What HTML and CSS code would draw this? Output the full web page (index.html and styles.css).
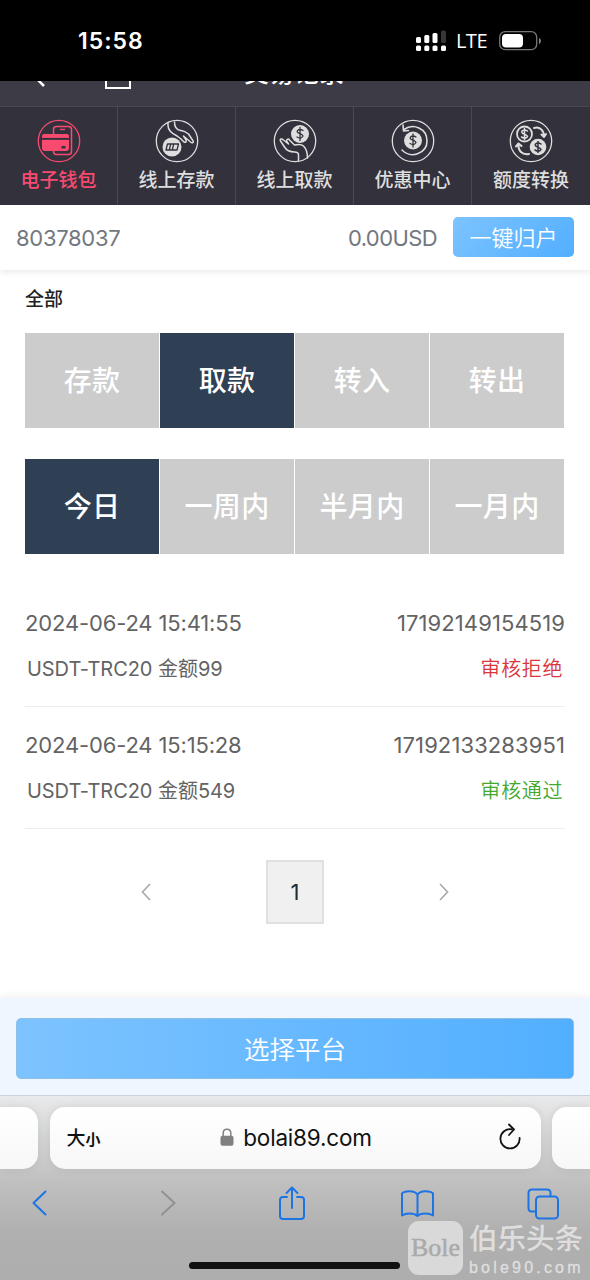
FILE: index.html
```html
<!DOCTYPE html>
<html lang="zh-CN">
<head>
<meta charset="utf-8">
<title>交易记录</title>
<link rel="stylesheet" href="styles.css">
</head>
<body>
<div class="screen">
  <header class="status">
    <span class="clock">15:58</span>
    <div class="status-right">
      <svg class="signal" width="30" height="22" viewBox="0 0 30 22" fill="#fff">
        <rect x="0" y="7" width="5" height="6" rx="1.5"/><rect x="8.300" y="5" width="5" height="8" rx="1.500"/><rect x="16.500" y="3" width="5" height="10" rx="1.500"/><rect x="25" y="0.500" width="5" height="12.500" rx="1.500" fill="#363636"/>
        <rect x="0" y="15.500" width="5" height="5.500" rx="1.500"/><rect x="8.300" y="15.500" width="5" height="5.500" rx="1.500"/><rect x="16.500" y="15.500" width="5" height="5.500" rx="1.500"/><rect x="25" y="15.500" width="5" height="5.500" rx="1.500"/>
      </svg>
      <span class="lte">LTE</span>
      <svg class="battery" width="43" height="20" viewBox="0 0 43 20">
        <rect x="0.700" y="0.700" width="37" height="18" rx="5.500" fill="none" stroke="#777" stroke-width="1.300"/>
        <rect x="3" y="3" width="21" height="13.500" rx="4" fill="#fff"/>
        <path d="M40 7c2.500 1 2.500 5 0 6z" fill="#888"/>
      </svg>
    </div>
  </header>

  <div class="titlebar">
    <div class="titlebar-inner">
      <svg class="title-back" width="14" height="22" viewBox="0 0 14 22" fill="none" stroke="#fff" stroke-width="2.500"><path d="M11 1L2 11l10 10"/></svg>
      <svg class="title-home" width="26" height="24" viewBox="0 0 26 24" fill="none" stroke="#fff" stroke-width="2"><path d="M1 0v23h24V0"/></svg>
      <h1 class="title">交易记录</h1>
    </div>
  </div>

  <nav class="nav">
    <a class="nav-item active">
      <svg width="44" height="44" viewBox="0 0 44 44" fill="none" stroke="currentColor" stroke-width="1.300">
        <circle cx="22" cy="22" r="20.700"/>
        <rect x="16.500" y="7.500" width="18" height="28" rx="3" stroke-width="1.500"/><path d="M23 10.500h5"/>
        <path d="M7 15h23q2 0 2 3v1H5v-1q0-3 2-3zM5 20.500h27V29q0 3-3 3H8q-3 0-3-3z" fill="currentColor" stroke="none"/>
        <path d="M4 19.800h29" stroke="#33323c" stroke-width="1.800"/>
        <rect x="24.500" y="27" width="4" height="2.500" fill="#33323c" stroke="none"/>
      </svg>
      <span>电子钱包</span>
    </a>
    <a class="nav-item">
      <svg width="44" height="44" viewBox="0 0 44 44" fill="none" stroke="currentColor" stroke-width="1.300" stroke-linecap="round" stroke-linejoin="round">
        <circle cx="22" cy="22" r="20.700"/>
        <path d="M13 3.500v3c0 5 4 8 9 10.500l4 3 3 3c2 1 3-1 1.500-3l-2-3 7 6c2 1.500 4 0 2-2l-4-6c-4-3-5-3-8-3.500q-6-1-6-8.500" stroke-width="1.500"/>
        <circle cx="17" cy="28" r="9.500" fill="currentColor" stroke="none"/>
        <path d="M12.500 25h11l-1.500 6H11zM15.500 26l-1 4M18.500 26l-1 4" stroke="#33323c" stroke-width="1.300"/>
      </svg>
      <span>线上存款</span>
    </a>
    <a class="nav-item">
      <svg width="44" height="44" viewBox="0 0 44 44" fill="none" stroke="currentColor" stroke-width="1.300" stroke-linecap="round" stroke-linejoin="round">
        <circle cx="22" cy="22" r="20.700"/>
        <circle cx="27" cy="15" r="9" fill="currentColor" stroke="none"/>
        <path d="M30 11.500q-3-2-5.500 0c-2 3 5.500 3 5.500 5.500q-2 3.500-6 1M27 8.500v13" stroke="#33323c"/>
        <path d="M25.500 42v-6q0-3-4-3-7 0-10-5l-4-6c-1-2 1-3 3-1l5 4-2-3c0-2 2-2.500 3-1l5 5c4-1 7-1 9 1q4 4 4 12" stroke-width="1.500"/>
      </svg>
      <span>线上取款</span>
    </a>
    <a class="nav-item">
      <svg width="44" height="44" viewBox="0 0 44 44" fill="none" stroke="currentColor" stroke-width="1.300" stroke-linecap="round" stroke-linejoin="round">
        <circle cx="22" cy="22" r="20.700"/>
        <circle cx="22" cy="21.500" r="9" fill="currentColor" stroke="none"/>
        <path d="M25 18q-3-2-5.500 0c-2 3 5.500 3 5.500 5.500q-2 3.500-6 1M22 15v13" stroke="#33323c"/>
        <path d="M13 10.500C22 4 36 9 36 22c0 13-17 18-25 9M12 6l.5 6 5-.5" stroke-width="1.600"/>
      </svg>
      <span>优惠中心</span>
    </a>
    <a class="nav-item">
      <svg width="44" height="44" viewBox="0 0 44 44" fill="none" stroke="currentColor" stroke-width="1.300" stroke-linecap="round" stroke-linejoin="round">
        <circle cx="22" cy="22" r="20.700"/>
        <circle cx="15.500" cy="15" r="7.500" stroke-width="1.800"/>
        <path d="M18.500 12q-3-2-5.500 0c-2 3 5.500 3 5.500 5.500q-2 3-6 .5M15.500 9.500v11" stroke-width="1.500"/>
        <circle cx="29" cy="28" r="8.300" fill="currentColor" stroke="none"/>
        <path d="M32 25q-3-2-5.500 0c-2 3 5.500 3 5.500 5.500q-2 3-6 .5M29 22.500v11" stroke="#33323c" stroke-width="1.500"/>
        <path d="M25 9c6-2 10 3 10 8M32.500 15.500l2.500 2.500 2-3M20 35c-7 1-11-3-10.500-10M7 27.500l2.500-3 3 2.500" stroke-width="2"/>
      </svg>
      <span>额度转换</span>
    </a>
  </nav>

  <section class="account">
    <span class="account-id">80378037</span>
    <span class="balance">0.00USD</span>
    <button class="collect">一键归户</button>
  </section>

  <main class="content">
    <h2 class="filter-title">全部</h2>
    <div class="tabs">
      <span class="tab">存款</span><span class="tab selected">取款</span><span class="tab">转入</span><span class="tab">转出</span>
    </div>
    <div class="tabs">
      <span class="tab selected">今日</span><span class="tab">一周内</span><span class="tab">半月内</span><span class="tab">一月内</span>
    </div>

    <ul class="records">
      <li class="record">
        <div class="record-line top"><span>2024-06-24 15:41:55</span><span class="order">17192149154519</span></div>
        <div class="record-line bottom"><span>USDT-TRC20 金额99</span><span class="state rejected">审核拒绝</span></div>
      </li>
      <li class="record">
        <div class="record-line top"><span>2024-06-24 15:15:28</span><span class="order">17192133283951</span></div>
        <div class="record-line bottom"><span>USDT-TRC20 金额549</span><span class="state passed">审核通过</span></div>
      </li>
    </ul>

    <div class="pager">
      <svg width="10" height="18" viewBox="0 0 10 18" fill="none" stroke="#aaa" stroke-width="1.700"><path d="M9 1L1.500 9 9 17"/></svg>
      <span class="page">1</span>
      <svg width="10" height="18" viewBox="0 0 10 18" fill="none" stroke="#aaa" stroke-width="1.700"><path d="M1 1l7.500 8L1 17"/></svg>
    </div>
  </main>

  <div class="platform">
    <button class="platform-btn">选择平台</button>
  </div>

  <footer class="browser">
    <div class="address-row">
      <div class="side-tab left"></div>
      <div class="address">
        <span class="size">大<small>小</small></span>
        <div class="site">
          <svg width="14" height="18" viewBox="0 0 14 18"><path d="M3.200 9V5.200c0-5.200 7.600-5.200 7.600 0V9" fill="none" stroke="#808080" stroke-width="1.500"/><rect x="0.500" y="7.700" width="13" height="10" rx="2" fill="#808080"/></svg>
          <span>bolai89.com</span>
        </div>
        <svg class="reload" width="24" height="28" viewBox="0 0 24 28" fill="none" stroke="#111" stroke-width="1.800" stroke-linecap="round" stroke-linejoin="round"><path d="M13.500 6.300A9.600 9.600 0 1 0 21.600 15M11 1.500l5 5-5 5.500"/></svg>
      </div>
      <div class="side-tab right"></div>
    </div>
    <div class="toolbar">
      <svg width="36" height="36" viewBox="0 0 36 36"><path d="M23.500 6.500L11.500 18l12 11.500"/></svg>
      <svg class="disabled" width="36" height="36" viewBox="0 0 36 36"><path d="M14 6.500L26.500 18 14 29.500"/></svg>
      <svg width="36" height="36" viewBox="0 0 36 36"><path d="M13 12H9q-3 0-3 3v16q0 3 3 3h18q3 0 3-3V15q0-3-3-3h-4M18 23V2.500M12.500 8L18 2.500 23.500 8"/></svg>
      <svg width="36" height="36" viewBox="0 0 36 36"><path d="M18.500 31V9.500C15.500 5 5.500 5.500 3 8.500v22c3.500-2.500 12-3 15.500.5 3.500-3.500 12-3 15.500-.5v-22C31.500 5.500 21.500 5 18.500 9.500"/></svg>
      <svg width="36" height="36" viewBox="0 0 36 36"><rect x="11" y="11.500" width="22" height="22" rx="3.500"/><path d="M11 26.500H7q-3.500 0-3.500-3.500V8Q3.500 4.500 7 4.500h15q3.500 0 3.500 3.500v3"/></svg>
    </div>
    <div class="home-indicator"></div>
  </footer>

  <div class="watermark">
    <div class="mark-logo">Bole</div>
    <div class="mark-text"><span class="mark-name">伯乐头条</span><span class="mark-url">bole90.com</span></div>
  </div>
</div>
</body>
</html>
```
FILE: styles.css
```css
* { box-sizing: border-box; }
body { margin: 0; background: #fff; font-family: Inter, "Noto Sans CJK SC", sans-serif; }
h1, h2, ul { margin: 0; padding: 0; }
button { border: 0; padding: 0; font-family: inherit; }
svg { display: block; flex: none; }
span { white-space: nowrap; }
.screen { position: relative; width: 590px; height: 1280px; overflow: hidden; display: flex; flex-direction: column; }

.status { height: 81px; flex: none; background: #000; color: #fff; display: flex; justify-content: space-between; align-items: center; padding: 0 48px 0 78px; }
.clock { font-size: 23px; font-weight: 600; letter-spacing: 1px; }
.status-right { display: flex; align-items: center; }
.lte { font-family: "Open Sans", sans-serif; font-size: 20px; font-weight: 500; letter-spacing: -0.500px; margin: 0 12px 0 10px; }

/* The title row is scrolled partly under the status bar. */
.titlebar { height: 25px; flex: none; overflow: hidden; background: #3d3b46; display: flex; flex-direction: column; justify-content: flex-end; }
.titlebar-inner { height: 52px; flex: none; display: flex; align-items: flex-end; padding: 0 0 17px 32px; }
.title-back { margin-bottom: 2px; }
.title-home { margin-left: 59px; }
.title { font-size: 25px; line-height: 34px; font-weight: 500; color: #fff; margin: 0 0 -1px 113px; }

.nav { height: 99px; flex: none; display: grid; grid-template-columns: 118px 118px 118px 118px 118px; background: #33323c; border-top: 1px solid #4a4953; }
.nav-item { display: flex; flex-direction: column; align-items: center; padding-top: 12px; color: #dededf; border-right: 1px solid #4a4953; font-size: 19px; font-weight: 500; line-height: 28px; }
.nav-item span { margin-top: 4px; }
.nav-item:last-child { border-right: 0; }
.nav-item.active { color: #fa4a70; }

.account { height: 65px; flex: none; display: flex; align-items: center; padding: 0 16px; color: #737780; font-size: 22px; box-shadow: 0 3px 6px rgba(0, 0, 0, .07); }
.account-id { flex: 1; letter-spacing: -0.300px; }
.balance { margin-right: 16px; letter-spacing: -0.600px; }
.collect { width: 121px; height: 40px; margin-top: -1px; padding-bottom: 3px; border-radius: 5px; color: #fff; font-size: 22px; font-weight: 350; background: linear-gradient(135deg, #7dc3ff, #52afff); }

.content { flex: 1; padding: 16px 26px 0 25px; }
.filter-title { font-size: 19px; line-height: 28px; font-weight: 500; color: #222; margin-bottom: 19px; }
.tabs { display: grid; grid-template-columns: repeat(4, 1fr); gap: 1px; margin-bottom: 31.500px; }
.tab { height: 94.500px; padding-bottom: 2px; background: #ccc; color: #fff; display: flex; align-items: center; justify-content: center; font-size: 28px; font-weight: 500; letter-spacing: 0.300px; }
.tab.selected { background: #304054; }

.records { list-style: none; margin-right: -1px; color: #636363; }
.record { height: 122px; padding-top: 15px; border-bottom: 1px solid #ededed; }
.record-line { display: flex; justify-content: space-between; align-items: center; }
.record-line.top { height: 46px; font-size: 22px; letter-spacing: -0.150px; }
.record-line.top .order { letter-spacing: 0.100px; }
.record-line.bottom { height: 42px; font-size: 20px; letter-spacing: -0.050px; padding: 0 2px; }
.record-line.bottom .state { font-weight: 350; letter-spacing: 0.600px; }
.rejected { color: #d9353c; }
.passed { color: #44a82d; }

.pager { height: 64px; margin-top: 31px; padding: 0 115px 0 116px; display: flex; justify-content: space-between; align-items: center; }
.page { width: 58px; height: 64px; border: 2px solid #e0e0e0; background: #f0f0f0; display: flex; align-items: center; justify-content: center; font-size: 22px; color: #222c34; }

.platform { height: 97px; flex: none; padding: 20px 16px 0; background: #eff6ff; box-shadow: 0 -2px 8px rgba(0, 0, 0, .06); }
.platform-btn { display: block; width: 558px; height: 61px; padding-bottom: 3px; border: 1px solid #8ebfe7; border-radius: 5px; color: #fff; font-size: 25.500px; font-weight: 350; background: linear-gradient(90deg, #7dc3ff, #52afff); }

.browser { height: 185px; flex: none; background: linear-gradient(#e9eaeb 0, #cacaca 65px, #c0c0c0 85px, #b0b0b0 135px, #aeaeae 100%); border-top: 1px solid #ccd2d9; }
.address-row { display: grid; grid-template-columns: 38px 491px 38px; column-gap: 11.500px; height: 62px; margin-top: 11px; }
.side-tab, .address { background: linear-gradient(#fff, #f7f7f7); box-shadow: 0 0 10px rgba(0, 0, 0, .08); }
.side-tab.left { border-radius: 0 15px 15px 0; }
.side-tab.right { border-radius: 15px 0 0 15px; }
.address { border-radius: 15px; display: grid; grid-template-columns: 1fr auto 1fr; align-items: center; padding: 0 19px 0 17px; color: #111; }
.size { font-size: 19px; font-weight: 500; line-height: 28px; padding-top: 3px; }
.size small { font-size: 15px; font-weight: 600; }
.site { display: flex; align-items: center; gap: 9px; font-size: 22.500px; letter-spacing: -0.200px; padding-left: 4px; margin-top: -2px; }
.reload { justify-self: end; margin-top: -3px; }
.toolbar { display: flex; justify-content: space-between; padding: 16px 29px 0 22px; }
.toolbar svg { fill: none; stroke: #1d74e5; stroke-width: 2; stroke-linecap: round; stroke-linejoin: round; }
.toolbar .disabled { stroke: #919191; }
.home-indicator { width: 211px; height: 7px; border-radius: 4px; background: #111; margin: 41px 0 0 189px; }

.watermark { position: absolute; left: 408px; top: 1221px; display: flex; gap: 6px; color: rgba(226, 226, 226, .95); }
.mark-logo { width: 55px; height: 54px; border-radius: 11px; background: #d9d9d9; color: #aaa; font: 26px/54px "Liberation Serif", serif; -webkit-text-stroke: 0.500px #aaa; text-align: center; }
.mark-text { display: flex; flex-direction: column; }
.mark-name { font-size: 28.500px; line-height: 35px; font-weight: 500; }
.mark-url { font: 16px/20px "Liberation Sans", sans-serif; letter-spacing: 3.200px; margin-top: 2px; -webkit-text-stroke: 0.300px currentColor; }
```
